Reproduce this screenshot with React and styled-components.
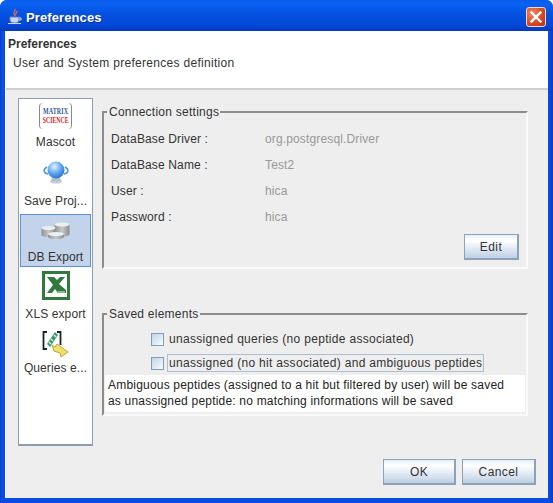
import React from "react";
import styled, { createGlobalStyle } from "styled-components";

const Global = createGlobalStyle`
  html, body { margin: 0; padding: 0; background: #fff; }
  body { font-family: "Liberation Sans", Arial, sans-serif; font-size: 12px; color: #333; }
`;

const Win = styled.div`
  width: 553px;
  height: 503px;
  box-sizing: border-box;
  display: flex;
  flex-direction: column;
  background: linear-gradient(90deg, #0a3ac8 0, #0a52e8 2px, #0a4ce0 4px, #0a4ce0 549px, #0a3ac8 553px);
  border-radius: 7px 7px 0 0;
  overflow: hidden;
`;

const TitleBar = styled.div`
  height: 31px;
  flex: none;
  display: flex;
  align-items: center;
  padding: 3px 7px 0 7px;
  box-sizing: border-box;
  background: linear-gradient(180deg, #0a5be8 0%, #0a62f4 12%, #0553e2 40%, #0449d8 80%, #0339c0 100%);
`;

const TitleText = styled.div`
  flex: 1;
  margin-left: 3px;
  font-size: 13px;
  font-weight: 700;
  color: #fff;
  letter-spacing: 0.1px;
  text-shadow: 1px 1px 0 #0a2f9a;
`;

const CloseBtn = styled.div`
  width: 20px;
  height: 20px;
  box-sizing: border-box;
  border: 1px solid #f4d8cc;
  border-radius: 3px;
  background: radial-gradient(circle at 30% 30%, #ee8a66, #d9441f 60%, #b8320f);
  display: flex;
  align-items: center;
  justify-content: center;
`;

const Body = styled.div`
  flex: 1;
  margin: 0 5px 5px 5px;
  display: flex;
  flex-direction: column;
  background: #eeeeee;
  border-left: 1px solid #f8f8f8;
  min-height: 0;
`;

const Header = styled.div`
  height: 59px;
  flex: none;
  box-sizing: border-box;
  background: #fff;
  border-bottom: 2px solid #cfcfcf;
  padding: 6px 2px;
`;

const HeaderTitle = styled.div`
  font-weight: 700;
  font-size: 12px;
  line-height: 14px;
  color: #333;
`;

const HeaderText = styled.div`
  margin: 5px 0 0 5px;
  line-height: 14px;
  letter-spacing: 0.3px;
  color: #333;
`;

const Main = styled.div`
  flex: 1;
  display: flex;
  padding: 8px 20px 0 12px;
  gap: 9px;
  min-height: 0;
`;

const Sidebar = styled.div`
  width: 75px;
  height: 348px;
  flex: none;
  box-sizing: border-box;
  background: #fff;
  border: 1px solid #8a9db2;
  border-bottom-width: 2px;
  padding: 3px 1px;
  display: flex;
  flex-direction: column;
`;

const NavItem = styled.div`
  height: ${(p) => p.$h}px;
  flex: none;
  box-sizing: border-box;
  display: flex;
  flex-direction: column;
  align-items: center;
  padding: ${(p) => p.$pt}px 0 ${(p) => p.$pb}px;
  border: 1px solid ${(p) => (p.$active ? "#5b8ed6" : "transparent")};
  background: ${(p) => (p.$active ? "#c3d3e9" : "transparent")};
  font-size: 12px;
  line-height: 14px;
  letter-spacing: 0.1px;
  color: #333;
  white-space: nowrap;
`;

const NavLabel = styled.span`
  margin-top: auto;
`;

const Logo = styled.div`
  width: 33px;
  height: 26px;
  box-sizing: border-box;
  border-left: 1px solid #888;
  border-right: 1px solid #888;
  border-radius: 4px;
  display: flex;
  flex-direction: column;
  align-items: center;
  justify-content: center;
  font-family: "Liberation Serif", serif;
  font-weight: 700;
  font-size: 6px;
  line-height: 9px;
`;

const LogoTop = styled.span`
  color: #2f5a9e;
  transform: scale(1, 1.4);
`;

const LogoBottom = styled.span`
  color: #d8222a;
  transform: scale(0.95, 1.4);
`;

const Content = styled.div`
  flex: 1;
  display: flex;
  flex-direction: column;
  gap: 38px;
  padding: 7px 0 13px;
  min-width: 0;
`;

const Group = styled.fieldset`
  margin: 0;
  padding: ${(p) => p.$pad};
  height: ${(p) => p.$h}px;
  flex: none;
  box-sizing: border-box;
  min-width: 0;
  border-style: solid;
  border-width: 2px;
  border-color: #8c8c8c #fafafa #fafafa #8c8c8c;
`;

const Legend = styled.legend`
  padding: 0 1px 0 2px;
  margin-left: 3px;
  font-size: 12px;
  line-height: 14px;
  letter-spacing: 0.25px;
  color: #333;
`;

const FieldGrid = styled.div`
  display: grid;
  grid-template-columns: 154px 1fr;
  grid-auto-rows: 26px;
  align-items: center;
  padding: 0 0 0 7px;
  letter-spacing: 0.14px;
`;

const FieldValue = styled.span`
  color: #999;
`;

const ButtonRow = styled.div`
  display: flex;
  justify-content: flex-end;
  gap: ${(p) => p.$gap || 0}px;
  padding: ${(p) => p.$pad || 0};
`;

const Button = styled.div`
  width: ${(p) => p.$w}px;
  height: 26px;
  box-sizing: border-box;
  border: 1px solid #8da2b8;
  border-bottom-width: 2px;
  border-right-width: 2px;
  background: linear-gradient(180deg, #e6eef6 0%, #ffffff 25%, #e4ecf5 55%, #bdd0e4 100%);
  display: flex;
  align-items: center;
  justify-content: center;
  letter-spacing: 0.4px;
  color: #333;
`;

const CheckRow = styled.div`
  height: 24px;
  display: flex;
  align-items: center;
  padding-left: ${(p) => p.$left}px;
  gap: 3px;
`;

const CheckBox = styled.span`
  width: 13px;
  height: 13px;
  flex: none;
  box-sizing: border-box;
  border: 1px solid #7f9db9;
  background: linear-gradient(135deg, #c4d6e8 0%, #dfe9f3 55%, #ffffff 100%);
`;

const CheckLabel = styled.span`
  letter-spacing: 0.31px;
  padding: 1px 1px;
  border: 1px solid ${(p) => (p.$focus ? "#a8bfd8" : "transparent")};
`;

const Note = styled.div`
  background: #fff;
  height: 37px;
  margin: 0 1px;
  box-sizing: border-box;
  padding: 2px 3px;
  line-height: 16px;
  letter-spacing: 0.2px;
  color: #222;
`;

const Footer = styled(ButtonRow)`
  margin: auto -8px 0 0;
`;

const JavaIcon = () => (
  <svg width="16" height="18" viewBox="0 0 16 18">
    <path d="M8 1c1 2-2 3-1 5 .5 1 1 1 1 2M10 3c0 2-2 2-1 4" fill="none" stroke="#e0703a" strokeWidth="1.3" />
    <path d="M3 9h9v3c0 2-2 3-4.500 3S3 14 3 12z" fill="#c9d4ee" stroke="#6f7fb8" />
    <path d="M12 10h2v2h-2M1 15.500h13" fill="none" stroke="#c9d4ee" />
  </svg>
);

const CloseGlyph = () => (
  <svg width="12" height="12" viewBox="0 0 12 12">
    <path d="M1.500 1.500l9 9M10.500 1.500l-9 9" stroke="#fff" strokeWidth="2.400" strokeLinecap="square" />
  </svg>
);

const GlobeIcon = () => (
  <svg width="26" height="23" viewBox="0 0 26 23">
    <defs>
      <radialGradient id="gl" cx="0.4" cy="0.3" r="0.8">
        <stop offset="0" stopColor="#e4f2ff" />
        <stop offset="0.5" stopColor="#5fa8ee" />
        <stop offset="1" stopColor="#1c62c8" />
      </radialGradient>
    </defs>
    <ellipse cx="13" cy="20.500" rx="6" ry="2" fill="#c4ccd6" />
    <path d="M9 16h8l1 4H8z" fill="#b6c0cc" />
    <circle cx="13" cy="9" r="8.500" fill="url(#gl)" />
    <path d="M4 6C0 8 0 12 5 13M22 6c4 2 4 6-1 7" fill="none" stroke="#4f95e2" strokeWidth="1.500" />
  </svg>
);

const Disk = ({ x, y, rx, ry, h }) => (
  <g>
    <path d={`M${x - rx} ${y}v${h}a${rx} ${ry} 0 0 0 ${rx * 2} 0v${-h}z`} fill="url(#disk)" />
    <ellipse cx={x} cy={y} rx={rx} ry={ry} fill="#eceeef" />
  </g>
);

const DiskIcon = () => (
  <svg width="29" height="18" viewBox="0 0 29 18">
    <defs>
      <linearGradient id="disk" x1="0" x2="1" y1="0" y2="0">
        <stop offset="0" stopColor="#8f9394" />
        <stop offset="0.5" stopColor="#c6c9ca" />
        <stop offset="1" stopColor="#8a8e90" />
      </linearGradient>
    </defs>
    <Disk x={21} y={2.500} rx={7.500} ry={2} h={10} />
    <Disk x={7.500} y={6} rx={7} ry={2} h={7} />
    <Disk x={15} y={12} rx={8} ry={2} h={3} />
  </svg>
);

const ExcelIcon = () => (
  <svg width="28" height="29" viewBox="0 0 28 29">
    <rect x="1.500" y="1.500" width="25" height="26" fill="#fff" stroke="#2f7a3c" strokeWidth="3" />
    <path d="M5 6h7l3 3 3-3h5l-6 7 7 6v3h-8l-3-4-3 4H5l6-8z" fill="#2f7a3c" />
    <path d="M16 20h7v2h-7z" fill="#8fb894" />
  </svg>
);

const QueriesIcon = () => (
  <svg width="27" height="28" viewBox="0 0 27 28">
    <path d="M5 2H1.500v17H5M15 2h3.500v13" fill="none" stroke="#222" strokeWidth="1.800" />
    <path d="M13 2l3 3-8 12-3-3z" fill="#3f9a6a" />
    <path d="M12 5l2 2M9 9l2 2M7 12l2 2" stroke="#d8efe0" strokeWidth="1.400" />
    <path d="M10 15l3 2 2-3 11 8-7 5-1-4-6-2z" fill="#f2e06a" stroke="#b8a840" />
  </svg>
);

const nav = [
  { label: "Mascot", h: 53, pt: 0, pb: 5, icon: <Logo><LogoTop>MATRIX</LogoTop><LogoBottom>SCIENCE</LogoBottom></Logo> },
  { label: "Save Proj...", h: 59, pt: 5, pb: 5, icon: <GlobeIcon /> },
  { label: "DB Export", h: 53, pt: 7, pb: 2, active: true, icon: <DiskIcon /> },
  { label: "XLS export", h: 55, pt: 3, pb: 0, icon: <ExcelIcon /> },
  { label: "Queries e...", h: 54, pt: 7, pb: 0, icon: <QueriesIcon /> },
];

const fields = [
  ["DataBase Driver :", "org.postgresql.Driver"],
  ["DataBase Name :", "Test2"],
  ["User :", "hica"],
  ["Password :", "hica"],
];

export default function App() {
  return (
    <Win>
      <Global />
      <TitleBar>
        <JavaIcon />
        <TitleText>Preferences</TitleText>
        <CloseBtn><CloseGlyph /></CloseBtn>
      </TitleBar>
      <Body>
        <Header>
          <HeaderTitle>Preferences</HeaderTitle>
          <HeaderText>User and System preferences definition</HeaderText>
        </Header>
        <Main>
          <Sidebar>
            {nav.map((n) => (
              <NavItem key={n.label} $h={n.h} $pt={n.pt} $pb={n.pb} $active={n.active}>
                {n.icon}
                <NavLabel>{n.label}</NavLabel>
              </NavItem>
            ))}
          </Sidebar>
          <Content>
            <Group $h={164} $pad="7px 0 0 0">
              <Legend>Connection settings</Legend>
              <FieldGrid>
                {fields.map(([k, v]) => (
                  <React.Fragment key={k}>
                    <span>{k}</span>
                    <FieldValue>{v}</FieldValue>
                  </React.Fragment>
                ))}
              </FieldGrid>
              <ButtonRow $pad="4px 7px 0 0">
                <Button $w={55}>Edit</Button>
              </ButtonRow>
            </Group>
            <Group $h={109} $pad="6px 0 0 0">
              <Legend>Saved elements</Legend>
              <CheckRow $left={47}>
                <CheckBox />
                <CheckLabel>unassigned queries (no peptide associated)</CheckLabel>
              </CheckRow>
              <CheckRow $left={47}>
                <CheckBox />
                <CheckLabel $focus>unassigned (no hit associated) and ambiguous peptides</CheckLabel>
              </CheckRow>
              <Note>
                Ambiguous peptides (assigned to a hit but filtered by user) will be saved
                <br />
                as unassigned peptide: no matching informations will be saved
              </Note>
            </Group>
            <Footer $gap={6}>
              <Button $w={73}>OK</Button>
              <Button $w={74}>Cancel</Button>
            </Footer>
          </Content>
        </Main>
      </Body>
    </Win>
  );
}
